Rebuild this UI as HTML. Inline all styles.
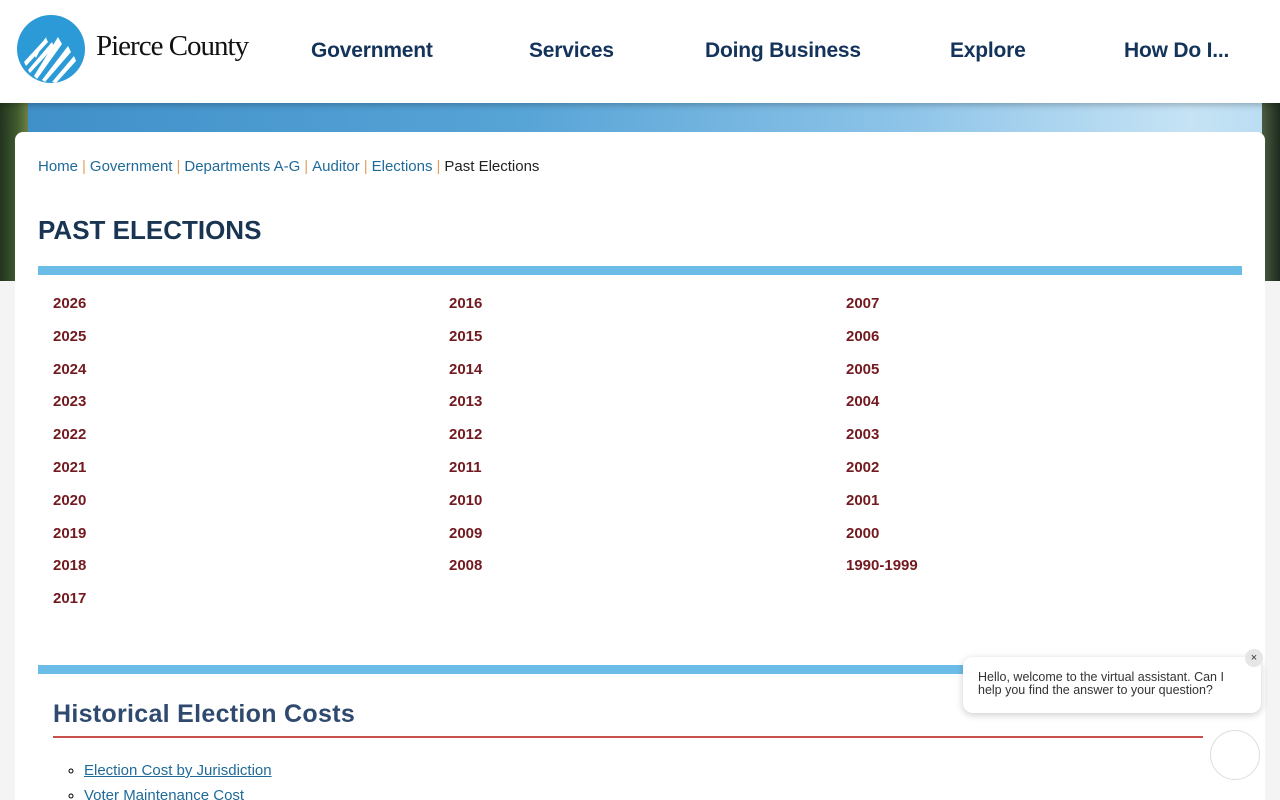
<!DOCTYPE html>
<html><head><meta charset="utf-8"><style>
*{box-sizing:border-box;margin:0;padding:0}
html,body{width:1280px;height:800px;overflow:hidden}
body{background:#f4f4f4;font-family:"Liberation Sans",sans-serif;position:relative}
header{position:absolute;top:0;left:0;width:1280px;height:103px;background:#fff;z-index:3;box-shadow:0 2px 6px rgba(0,0,0,.25)}
.logo{position:absolute;left:16px;top:14px}
.brand{position:absolute;left:96px;top:30px;font-family:"Liberation Serif",serif;font-size:29px;color:#111;letter-spacing:-1px}
nav a{position:absolute;top:39px;font-size:21px;font-weight:bold;color:#13335a;text-decoration:none;letter-spacing:-.2px}
.hero{position:absolute;top:103px;left:0;width:1280px;height:178px;background:linear-gradient(90deg,#3f8fc8 0%,#56a3d6 40%,#8cc3e8 70%,#c6e3f5 93%,#b8dcf2 100%)}
.treeL{position:absolute;left:0;top:0;width:28px;height:178px;background:linear-gradient(90deg,#23341f,#3f5a2e 60%,#6d8045)}
.treeR{position:absolute;right:0;top:0;width:18px;height:178px;background:linear-gradient(90deg,#4a5d40,#1d2a1e)}
.card{position:absolute;left:15px;top:132px;width:1250px;height:668px;background:#fff;border-radius:8px 8px 0 0;z-index:2;overflow:hidden}
.bc{position:absolute;left:23px;top:26px;font-size:15px;color:#222}
.bc a{color:#1f6a98;text-decoration:none}
.bc span{color:#e0a060;margin:0 4px}
h1{position:absolute;left:23px;top:83px;font-size:26px;color:#1a3552;letter-spacing:0}
.bar{position:absolute;left:23px;width:1204px;height:9px;background:#6bbde8}
.col{position:absolute;top:163px}
.col a{display:block;height:32.8px;font-size:15px;font-weight:bold;color:#721a1f;text-decoration:none}
h2{position:absolute;left:38px;top:568px;font-size:25px;color:#2f4a6e;letter-spacing:.3px}
.red{position:absolute;left:38px;top:604px;width:1150px;height:2px;background:#c9524f}
ul{position:absolute;left:69px;top:630px;list-style:circle;font-size:15px}
ul li{margin-bottom:8px}
ul a{color:#1f6a98;text-decoration:underline}
.chat{position:absolute;left:963px;top:657px;width:298px;height:56px;background:#fff;border-radius:10px;box-shadow:0 2px 8px rgba(0,0,0,.2);z-index:4;padding:14px 0 0 15px;font-size:12.5px;line-height:13px;color:#333}
.x{position:absolute;right:-2px;top:-8px;width:18px;height:18px;border-radius:50%;background:#e6e6e6;font-size:11px;text-align:center;line-height:18px;color:#333}
.circ{position:absolute;left:1210px;top:730px;width:50px;height:50px;border-radius:50%;border:1px solid #ddd;background:#fff;z-index:4}
</style></head><body>
<header>
<svg class="logo" width="70" height="70" viewBox="0 0 70 70"><circle cx="35" cy="35" r="34" fill="#2b9ad6"/>
<g fill="#fff"><polygon points="8,48 30,24 32,28 10,52"/><polygon points="12,56 36,28 38,33 14,59"/><polygon points="18,62 42,23 46,30 21,65"/><polygon points="26,66 52,32 55,38 29,68"/><polygon points="36,68 58,42 60,47 40,69"/><polygon points="18,40 28,26 31,22 20,44"/></g></svg>
<div class="brand">Pierce County</div>
<nav><a style="left:311px">Government</a><a style="left:529px">Services</a><a style="left:705px">Doing Business</a><a style="left:950px">Explore</a><a style="left:1124px">How Do I...</a></nav>
</header>
<div class="hero"><div class="treeL"></div><div class="treeR"></div></div>
<div class="card">
<div class="bc"><a>Home</a><span>|</span><a>Government</a><span>|</span><a>Departments A-G</a><span>|</span><a>Auditor</a><span>|</span><a>Elections</a><span>|</span>Past Elections</div>
<h1>PAST ELECTIONS</h1>
<div class="bar" style="top:134px"></div>
<div class="col" style="left:38px"><a>2026</a><a>2025</a><a>2024</a><a>2023</a><a>2022</a><a>2021</a><a>2020</a><a>2019</a><a>2018</a><a>2017</a></div>
<div class="col" style="left:434px"><a>2016</a><a>2015</a><a>2014</a><a>2013</a><a>2012</a><a>2011</a><a>2010</a><a>2009</a><a>2008</a></div>
<div class="col" style="left:831px"><a>2007</a><a>2006</a><a>2005</a><a>2004</a><a>2003</a><a>2002</a><a>2001</a><a>2000</a><a>1990-1999</a></div>
<div class="bar" style="top:533px"></div>
<h2>Historical Election Costs</h2>
<div class="red"></div>
<ul><li><a>Election Cost by Jurisdiction</a></li><li><a>Voter Maintenance Cost</a></li></ul>
</div>
<div class="chat">Hello, welcome to the virtual assistant. Can I<br>help you find the answer to your question?<div class="x">×</div></div>
<div class="circ"></div>
</body></html>
